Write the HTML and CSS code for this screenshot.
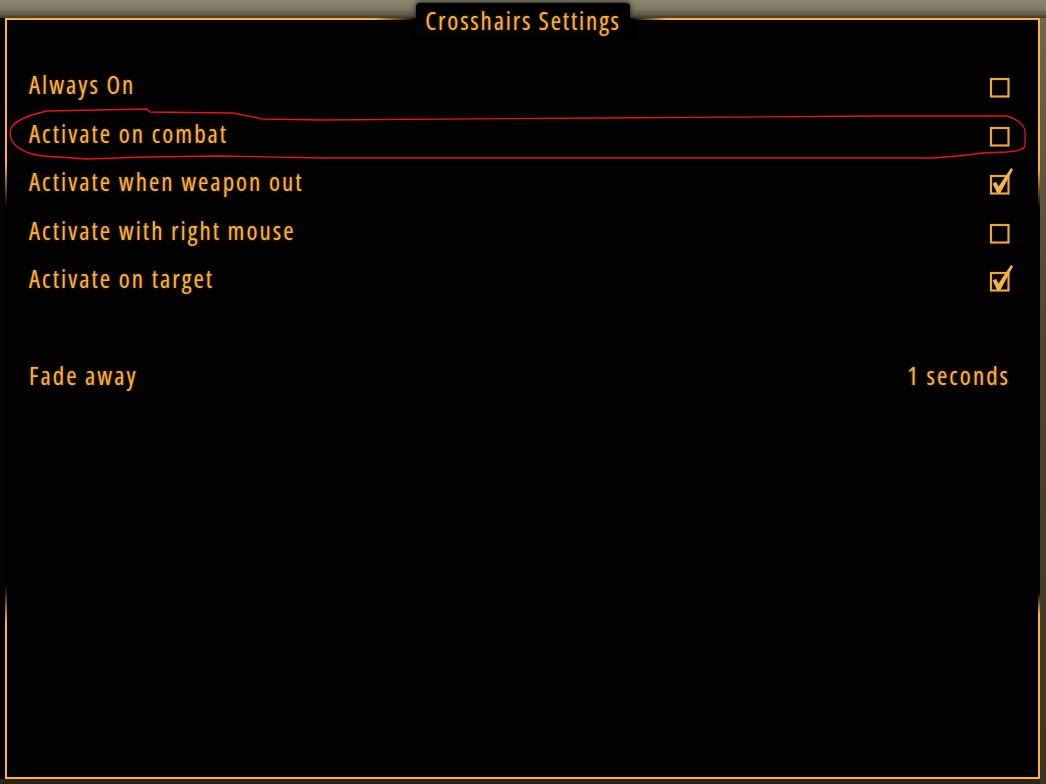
FILE: index.html
```html
<!DOCTYPE html>
<html>
<head>
<meta charset="utf-8">
<title>Crosshairs Settings</title>
<link rel="stylesheet" href="styles.css">
</head>
<body>
<div class="frame">
  <div class="tab">Crosshairs Settings</div>
  <div class="list">
    <div class="row">
      <span class="label">Always On</span>
      <svg class="cb" viewBox="0 0 26 28" width="26" height="28"><rect x="1" y="8" width="17.5" height="17.5"/></svg>
    </div>
    <div class="row">
      <span class="label">Activate on combat</span>
      <svg class="cb" viewBox="0 0 26 28" width="26" height="28"><rect x="1" y="8" width="17.5" height="17.5"/></svg>
    </div>
    <div class="row">
      <span class="label">Activate when weapon out</span>
      <svg class="cb" viewBox="0 0 26 28" width="26" height="28"><rect x="1" y="8" width="17.5" height="17.5"/><path class="tick" d="M2.6 15.6 L6 13.8 L8.6 18.4 L21 0 L23 1.6 L10.2 25.2 L7.2 25.2 Z"/></svg>
    </div>
    <div class="row">
      <span class="label">Activate with right mouse</span>
      <svg class="cb" viewBox="0 0 26 28" width="26" height="28"><rect x="1" y="8" width="17.5" height="17.5"/></svg>
    </div>
    <div class="row">
      <span class="label">Activate on target</span>
      <svg class="cb" viewBox="0 0 26 28" width="26" height="28"><rect x="1" y="8" width="17.5" height="17.5"/><path class="tick" d="M2.6 15.6 L6 13.8 L8.6 18.4 L21 0 L23 1.6 L10.2 25.2 L7.2 25.2 Z"/></svg>
    </div>
    <div class="row spacer"></div>
    <div class="row">
      <span class="label">Fade away</span>
      <span class="value">1 seconds</span>
    </div>
  </div>
</div>
<svg class="annotation" viewBox="0 0 1046 784" width="1046" height="784">
  <path d="M10,133 C10,124 20,117 47,111 L147,109 L150,112 L233,113 L263,119 L320,120 L600,118 L880,116 L1007,116 C1018,119 1025,126 1025,132 L1025,145 C1024,150 1018,151 1007,152 L983,153 L958,156 L933,158 L320,158 L220,156 L147,157 L87,159 L43,156 C25,154 10,146 10,133 Z"/>
</svg>
</body>
</html>
```

FILE: styles.css
```css
html, body {
  margin: 0;
  padding: 0;
}

body {
  width: 1046px;
  height: 784px;
  overflow: hidden;
  position: relative;
  font-family: "Open Sans", "DejaVu Sans Condensed", sans-serif;
  font-stretch: 75%;
  background:
    linear-gradient(to bottom, #8a8770 0px, #7d7863 9px, #5a5545 15px, #3c382c 18px) top left / 100% 18px no-repeat,
    linear-gradient(to bottom, #6f6650 0px, #4e4534 40%, #3a3226 100%) right 0 top 18px / 6px 100% no-repeat,
    linear-gradient(#2b2419, #2b2419) left bottom / 100% 5px no-repeat,
    #030303;
  padding-top: 18px;
  box-sizing: border-box;
}

.frame {
  position: relative;
  margin-left: 5px;
  width: 1035px;
  height: 761px;
  box-sizing: border-box;
  padding: 2px;
  background:
    linear-gradient(to right, #ffb142 0px, #ffb142 368px, rgba(120, 80, 20, 0) 412px, rgba(120, 80, 20, 0) 626px, #ffb142 662px, #ffb142 100%) left top / 100% 2px no-repeat,
    linear-gradient(#ffb142, #ffb142) left bottom / 100% 2px no-repeat,
    linear-gradient(to bottom, #ffb142 0px, #ffb142 145px, rgba(255, 177, 66, 0) 188px, rgba(255, 177, 66, 0) 568px, #ffb142 604px, #ffb142 100%) left top / 2px 100% no-repeat,
    linear-gradient(to bottom, #ffb142 0px, #ffb142 150px, rgba(255, 177, 66, 0) 190px, rgba(255, 177, 66, 0) 574px, #ffb142 596px, #ffb142 100%) right top / 2px 100% no-repeat,
    #020202;
}

.tab {
  position: absolute;
  left: 411px;
  top: -15px;
  width: 214px;
  height: 34px;
  background: #020202;
  border-radius: 4px 4px 0 0;
  box-shadow: 0 -1px 5px rgba(0, 0, 0, 0.8);
  color: #f5b243;
  font-size: 25px;
  line-height: 34px;
  letter-spacing: 1.8px;
  text-align: center;
  text-shadow: 0 0 3px rgba(255, 150, 30, 0.45);
}

.list {
  display: flex;
  flex-direction: column;
  padding: 40px 28px 0 22px;
}

.row {
  height: 48.5px;
  display: flex;
  align-items: center;
  justify-content: space-between;
  color: #f5b243;
  font-size: 25px;
  letter-spacing: 2px;
  text-shadow: 0 0 3px rgba(255, 150, 30, 0.45);
}

.cb {
  display: block;
  margin-right: -6px;
  margin-top: 2px;
  overflow: visible;
}

.cb rect {
  fill: none;
  stroke: #e9a640;
  stroke-width: 2.2;
}

.cb .tick {
  fill: #f6b444;
}

.annotation {
  position: absolute;
  left: 0;
  top: 0;
  pointer-events: none;
}

.annotation path {
  fill: none;
  stroke: #e8141a;
  stroke-width: 1.3;
}
```
